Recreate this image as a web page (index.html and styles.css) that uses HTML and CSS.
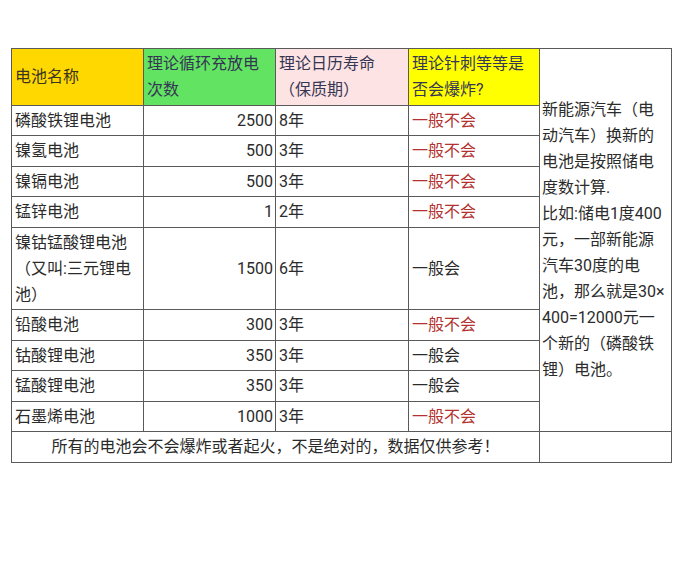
FILE: index.html
```html
<!DOCTYPE html>
<html lang="zh-CN">
<head>
<meta charset="utf-8">
<link rel="stylesheet" href="styles.css">
</head>
<body>
<table class="grid">
  <colgroup>
    <col class="c1"><col class="c2"><col class="c3"><col class="c4"><col class="c5">
  </colgroup>
  <tr class="head">
    <td class="h-gold">电池名称</td>
    <td class="h-green">理论循环充放电次数</td>
    <td class="h-pink">理论日历寿命（保质期）</td>
    <td class="h-yellow">理论针刺等等是否会爆炸?</td>
    <td class="note" rowspan="10">新能源汽车（电动汽车）换新的电池是按照储电度数计算.<br>比如:储电1度400元，一部新能源汽车30度的电池，那么就是30×400=12000元一个新的（磷酸铁锂）电池。</td>
  </tr>
  <tr><td>磷酸铁锂电池</td><td class="num">2500</td><td>8年</td><td class="red">一般不会</td></tr>
  <tr><td>镍氢电池</td><td class="num">500</td><td>3年</td><td class="red">一般不会</td></tr>
  <tr><td>镍镉电池</td><td class="num">500</td><td>3年</td><td class="red">一般不会</td></tr>
  <tr><td>锰锌电池</td><td class="num">1</td><td>2年</td><td class="red">一般不会</td></tr>
  <tr><td>镍钴锰酸锂电池（又叫:三元锂电池）</td><td class="num">1500</td><td>6年</td><td>一般会</td></tr>
  <tr><td>铅酸电池</td><td class="num">300</td><td>3年</td><td class="red">一般不会</td></tr>
  <tr><td>钴酸锂电池</td><td class="num">350</td><td>3年</td><td>一般会</td></tr>
  <tr><td>锰酸锂电池</td><td class="num">350</td><td>3年</td><td>一般会</td></tr>
  <tr><td>石墨烯电池</td><td class="num">1000</td><td>3年</td><td class="red">一般不会</td></tr>
  <tr><td class="foot" colspan="4">所有的电池会不会爆炸或者起火，不是绝对的，数据仅供参考！</td><td></td></tr>
</table>
</body>
</html>
```

FILE: styles.css
```css
html, body {
  margin: 0;
  padding: 0;
  background: #ffffff;
}
body {
  padding: 48px 0 0 11px;
  font-family: Roboto, "Noto Sans CJK SC", sans-serif;
  font-size: 16px;
  color: #2b2b2b;
}
.grid {
  border-collapse: collapse;
  table-layout: fixed;
  width: 660px;
  background: #ffffff;
}
.c1 { width: 132px; }
.c2 { width: 132px; }
.c3 { width: 133px; }
.c4 { width: 131px; }
.c5 { width: 132px; }
.grid td {
  border: 1px solid #5a5a5a;
  padding: 2px 3px 1.5px 3px;
  line-height: 26px;
  vertical-align: middle;
  text-align: left;
  word-break: break-all;
}
.grid td.num {
  text-align: right;
  padding-right: 2px;
}
.grid td.red {
  color: #b3322f;
}
.head td { color: #353654; }
.head td.h-gold { background: #ffd800; color: #3a3420; }
.head td.h-green { background: #62e462; }
.head td.h-pink { background: #fde3e3; }
.head td.h-yellow { background: #ffff00; }
.grid td.note {
  background: #ffffff;
  color: #2b2b2b;
  padding: 2px 2px 2px 2px;
}
.grid td.foot {
  text-align: center;
  color: #2a2a2a;
}
```
